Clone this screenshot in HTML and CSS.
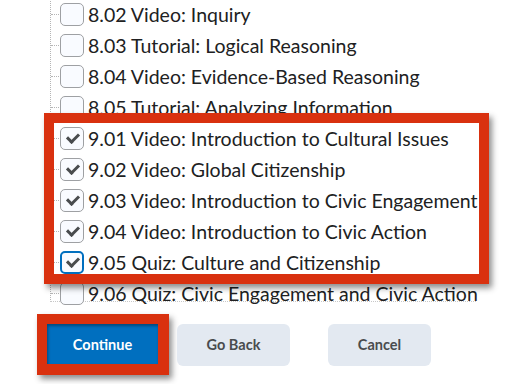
FILE: index.html
```html
<!DOCTYPE html>
<html lang="en">
<head>
  <meta charset="UTF-8" />
  <title>Select Topics</title>
  <link rel="stylesheet" href="styles.css">
</head>
<body>

<main class="picker">
  <ul class="tree">
    <li><span class="box"></span>8.02 Video: Inquiry</li>
    <li><span class="box"></span>8.03 Tutorial: Logical Reasoning</li>
    <li><span class="box"></span>8.04 Video: Evidence-Based Reasoning</li>
    <li><span class="box"></span>8.05 Tutorial: Analyzing Information</li>
    <li><span class="box checked"></span>9.01 Video: Introduction to Cultural Issues</li>
    <li><span class="box checked"></span>9.02 Video: Global Citizenship</li>
    <li><span class="box checked"></span>9.03 Video: Introduction to Civic Engagement</li>
    <li><span class="box checked"></span>9.04 Video: Introduction to Civic Action</li>
    <li><span class="box checked focus"></span>9.05 Quiz: Culture and Citizenship</li>
    <li><span class="box"></span>9.06 Quiz: Civic Engagement and Civic Action</li>
  </ul>

  <!-- highlight drawn over the selected topics -->
  <div class="highlight"></div>

  <div class="actions">
    <span class="callout"><button class="btn primary">Continue</button></span>
    <button class="btn">Go Back</button>
    <button class="btn cancel">Cancel</button>
  </div>
</main>

</body>
</html>
```

FILE: styles.css
```css
body {
  margin: 0;
  background: #fff;
  font-family: Lato, "Open Sans", sans-serif;
  color: #202122;
  width: 512px;
  height: 384px;
  overflow: hidden;
}
.picker {
  position: relative;
}
.tree {
  list-style: none;
  margin: -1px 0 0 50px;
  padding: 0;
  border-left: 1px dotted #b5b5b5;
  width: 425px;
  border-bottom: 1px dotted #c8c8c8;
  height: 302px;
}
.tree li {
  height: 31px;
  display: flex;
  align-items: center;
  font-size: 19.5px;
  white-space: nowrap;
  position: relative;
  padding-left: 9px;
}
.tree li::before {
  content: "";
  position: absolute;
  left: 0;
  top: 15px;
  width: 8px;
  border-top: 1px dotted #b5b5b5;
}
.box {
  box-sizing: border-box;
  width: 24px;
  height: 23px;
  border: 1px solid #9ea0a3;
  border-radius: 5px;
  background: #f9fbff;
  margin-right: 4px;
  flex: none;
  position: relative;
}
.box.checked::after {
  content: "";
  position: absolute;
  left: 6px;
  top: 5px;
  width: 9px;
  height: 5px;
  border-left: 3px solid #494c4e;
  border-bottom: 3px solid #494c4e;
  transform: rotate(-45deg);
}
.box.focus {
  border: 2px solid #006fbf;
}
.box.focus::after {
  left: 5px;
  top: 4px;
}
.highlight {
  position: absolute;
  left: 44px;
  top: 114px;
  width: 445px;
  height: 171px;
  box-sizing: border-box;
  border: 10px solid #d9310f;
  box-shadow: 3px 4px 6px rgba(0, 0, 0, 0.45);
}
.actions {
  display: flex;
  align-items: center;
  padding: 12px 0 0 37px;
}
.callout {
  display: inline-flex;
  border: 10px solid #d9310f;
  border-right-width: 11px;
  border-bottom-width: 11px;
  box-shadow: 3px 4px 6px rgba(0, 0, 0, 0.45);
  margin-right: 8px;
}
.btn {
  font-family: Lato, sans-serif;
  font-weight: bold;
  font-size: 14.5px;
  border: none;
  border-radius: 6px;
  height: 42px;
  width: 113px;
  background: #e3e9f1;
  color: #494c4e;
}
.btn.primary {
  background: #006fbf;
  color: #fff;
  width: 111px;
  height: 40px;
  border-radius: 0;
  box-shadow: inset 1px 2px 3px rgba(0, 0, 0, 0.35);
}
.btn.cancel {
  width: 103px;
  margin-left: 38px;
}
```
